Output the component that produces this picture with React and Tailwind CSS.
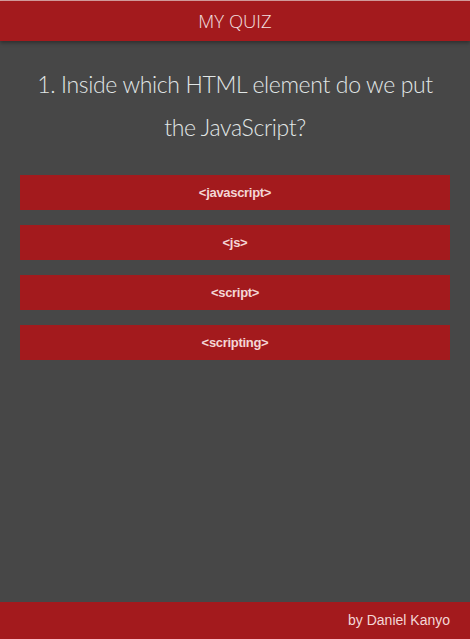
export default function App() {
  const answers = ["<javascript>", "<js>", "<script>", "<scripting>"];
  return (
    <div className="flex h-[639px] w-full flex-col bg-[#474747]">
      <div className="h-px w-full bg-[#d9a0a0]" />
      <header className="relative z-10 flex h-10 items-center justify-center bg-[#a31a1d] shadow-[0_2px_4px_rgba(0,0,0,0.35)]">
        <span className="text-[18.5px] text-[#f3e1e1] [font-family:'Open_Sans',sans-serif] font-light">MY QUIZ</span>
      </header>
      <main className="flex flex-1 flex-col px-5">
        <h1 className="mt-[22px] text-center text-[23px] leading-[43px] tracking-[-0.35px] text-[#e1e6e6] font-light [font-family:'Lato',sans-serif]">
          1. Inside which HTML element do we put the JavaScript?
        </h1>
        <div className="mt-[26px] flex flex-col gap-[15px]">
          {answers.map((a) => (
            <button
              key={a}
              className="flex h-[35px] w-full items-center justify-center bg-[#a31a1d] text-[13px] font-bold tracking-[-0.3px] text-[#f3d6d6] [font-family:'Liberation_Sans',Arial,sans-serif]"
            >
              {a}
            </button>
          ))}
        </div>
      </main>
      <footer className="flex h-[37px] items-center justify-end bg-[#a31a1d] pr-5">
        <span className="text-[14px] text-[#f3d6d6] [font-family:'Liberation_Sans',Arial,sans-serif]">by Daniel Kanyo</span>
      </footer>
    </div>
  );
}
